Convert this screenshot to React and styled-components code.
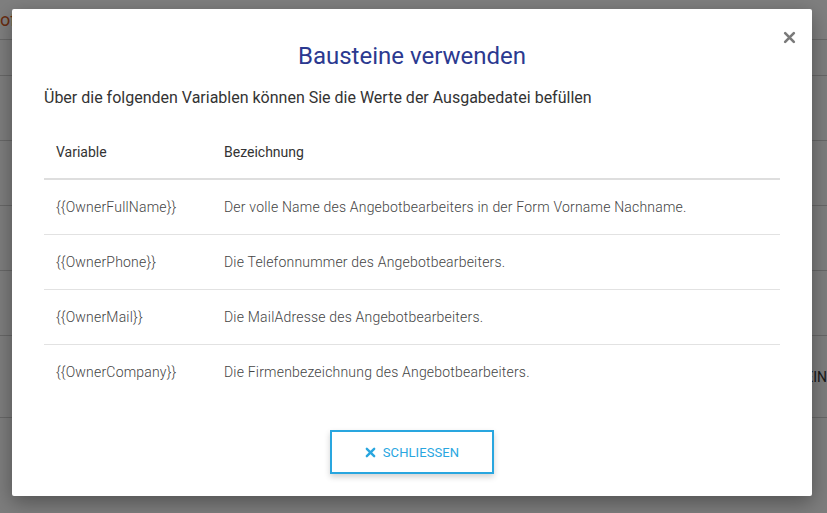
import React from 'react'
import styled, { createGlobalStyle } from 'styled-components'

const GlobalStyle = createGlobalStyle`
  html, body {
    margin: 0;
    padding: 0;
    font-family: Roboto, "Liberation Sans", sans-serif;
    background: #fff;
  }
  * { box-sizing: border-box; }
`

const Page = styled.div`
  width: 827px;
  height: 513px;
  overflow: hidden;
  position: relative;
  background: #fafafa;
`

const TopBar = styled.div`
  height: 40px;
  background: #ffffff;
  border-bottom: 1px solid #d0d0d0;
  display: flex;
  align-items: center;
`

const Brand = styled.span`
  color: #d2591e;
  font-size: 18px;
  margin-left: 0;
`

const BgRows = styled.div`
  display: flex;
  flex-direction: column;
`

const BgRow = styled.div`
  height: ${p => p.h}px;
  border-bottom: 1px solid #cfcfcf;
  display: flex;
  align-items: center;
  justify-content: space-between;
  font-size: 14px;
  color: #333;
`

const Overlay = styled.div`
  position: absolute;
  inset: 0;
  background: rgba(0, 0, 0, 0.5);
  padding: 9px 0 0 12px;
`

const Dialog = styled.div`
  position: relative;
  width: 800px;
  height: 487px;
  background: #fff;
  border-radius: 2px;
  box-shadow: 0 6px 20px rgba(0, 0, 0, 0.35);
  padding: 31px 32px 0;
  display: flex;
  flex-direction: column;
`

const Close = styled.button`
  position: absolute;
  top: 17px;
  right: 12px;
  width: 22px;
  height: 22px;
  border: none;
  background: none;
  padding: 0;
  display: flex;
  align-items: center;
  justify-content: center;
  cursor: pointer;
`

const Title = styled.h2`
  margin: 0;
  text-align: center;
  font-weight: 400;
  font-size: 24px;
  line-height: 32px;
  color: #2b3990;
`

const Intro = styled.p`
  margin: 16px 0 0;
  font-size: 16px;
  line-height: 20px;
  color: #333;
`

const Table = styled.table`
  margin-top: 17px;
  width: 100%;
  table-layout: fixed;
  border-collapse: collapse;
  font-size: 14px;
`

const Th = styled.th`
  text-align: left;
  font-weight: 400;
  color: #333;
  height: 54px;
  padding: 0 12px;
  border-bottom: 2px solid #dedede;
  width: ${p => p.w || 'auto'};
`

const Td = styled.td`
  height: 55px;
  padding: 0 12px;
  font-weight: 300;
  letter-spacing: 0.2px;
  color: #444;
  white-space: nowrap;
  border-bottom: ${p => (p.last ? 'none' : '1px solid #e2e2e2')};
`

const Footer = styled.div`
  display: flex;
  justify-content: center;
  margin-top: 31px;
`

const Button = styled.button`
  width: 164px;
  height: 44px;
  border: 2px solid #29a6df;
  background: #fff;
  color: #29a6df;
  font-family: Roboto, "Liberation Sans", sans-serif;
  font-size: 13px;
  letter-spacing: 0.1px;
  display: flex;
  align-items: center;
  justify-content: center;
  gap: 7px;
  box-shadow: 0 3px 6px rgba(0, 0, 0, 0.18);
  cursor: pointer;
`

const rows = [
  ['{{OwnerFullName}}', 'Der volle Name des Angebotbearbeiters in der Form Vorname Nachname.'],
  ['{{OwnerPhone}}', 'Die Telefonnummer des Angebotbearbeiters.'],
  ['{{OwnerMail}}', 'Die MailAdresse des Angebotbearbeiters.'],
  ['{{OwnerCompany}}', 'Die Firmenbezeichnung des Angebotbearbeiters.'],
]

function XIcon({ size, color, stroke }) {
  return (
    <svg width={size} height={size} viewBox="0 0 12 12">
      <path d="M2 2 L10 10 M10 2 L2 10" stroke={color} strokeWidth={stroke} strokeLinecap="round" />
    </svg>
  )
}

export default function App() {
  return (
    <Page>
      <GlobalStyle />
      <TopBar>
        <Brand>ofi</Brand>
      </TopBar>
      <BgRows>
        <BgRow h={36} />
        <BgRow h={65} />
        <BgRow h={65} />
        <BgRow h={65} />
        <BgRow h={65} />
        <BgRow h={82}>
          <span />
          <span>EIN</span>
        </BgRow>
      </BgRows>
      <Overlay>
        <Dialog>
          <Close aria-label="close">
            <XIcon size={13} color="#7a7a7a" stroke={2.4} />
          </Close>
          <Title>Bausteine verwenden</Title>
          <Intro>Über die folgenden Variablen können Sie die Werte der Ausgabedatei befüllen</Intro>
          <Table>
            <thead>
              <tr>
                <Th w="168px">Variable</Th>
                <Th>Bezeichnung</Th>
              </tr>
            </thead>
            <tbody>
              {rows.map(([v, d], i) => (
                <tr key={v}>
                  <Td last={i === rows.length - 1}>{v}</Td>
                  <Td last={i === rows.length - 1}>{d}</Td>
                </tr>
              ))}
            </tbody>
          </Table>
          <Footer>
            <Button>
              <XIcon size={11} color="#29a6df" stroke={2.6} />
              SCHLIESSEN
            </Button>
          </Footer>
        </Dialog>
      </Overlay>
    </Page>
  )
}
